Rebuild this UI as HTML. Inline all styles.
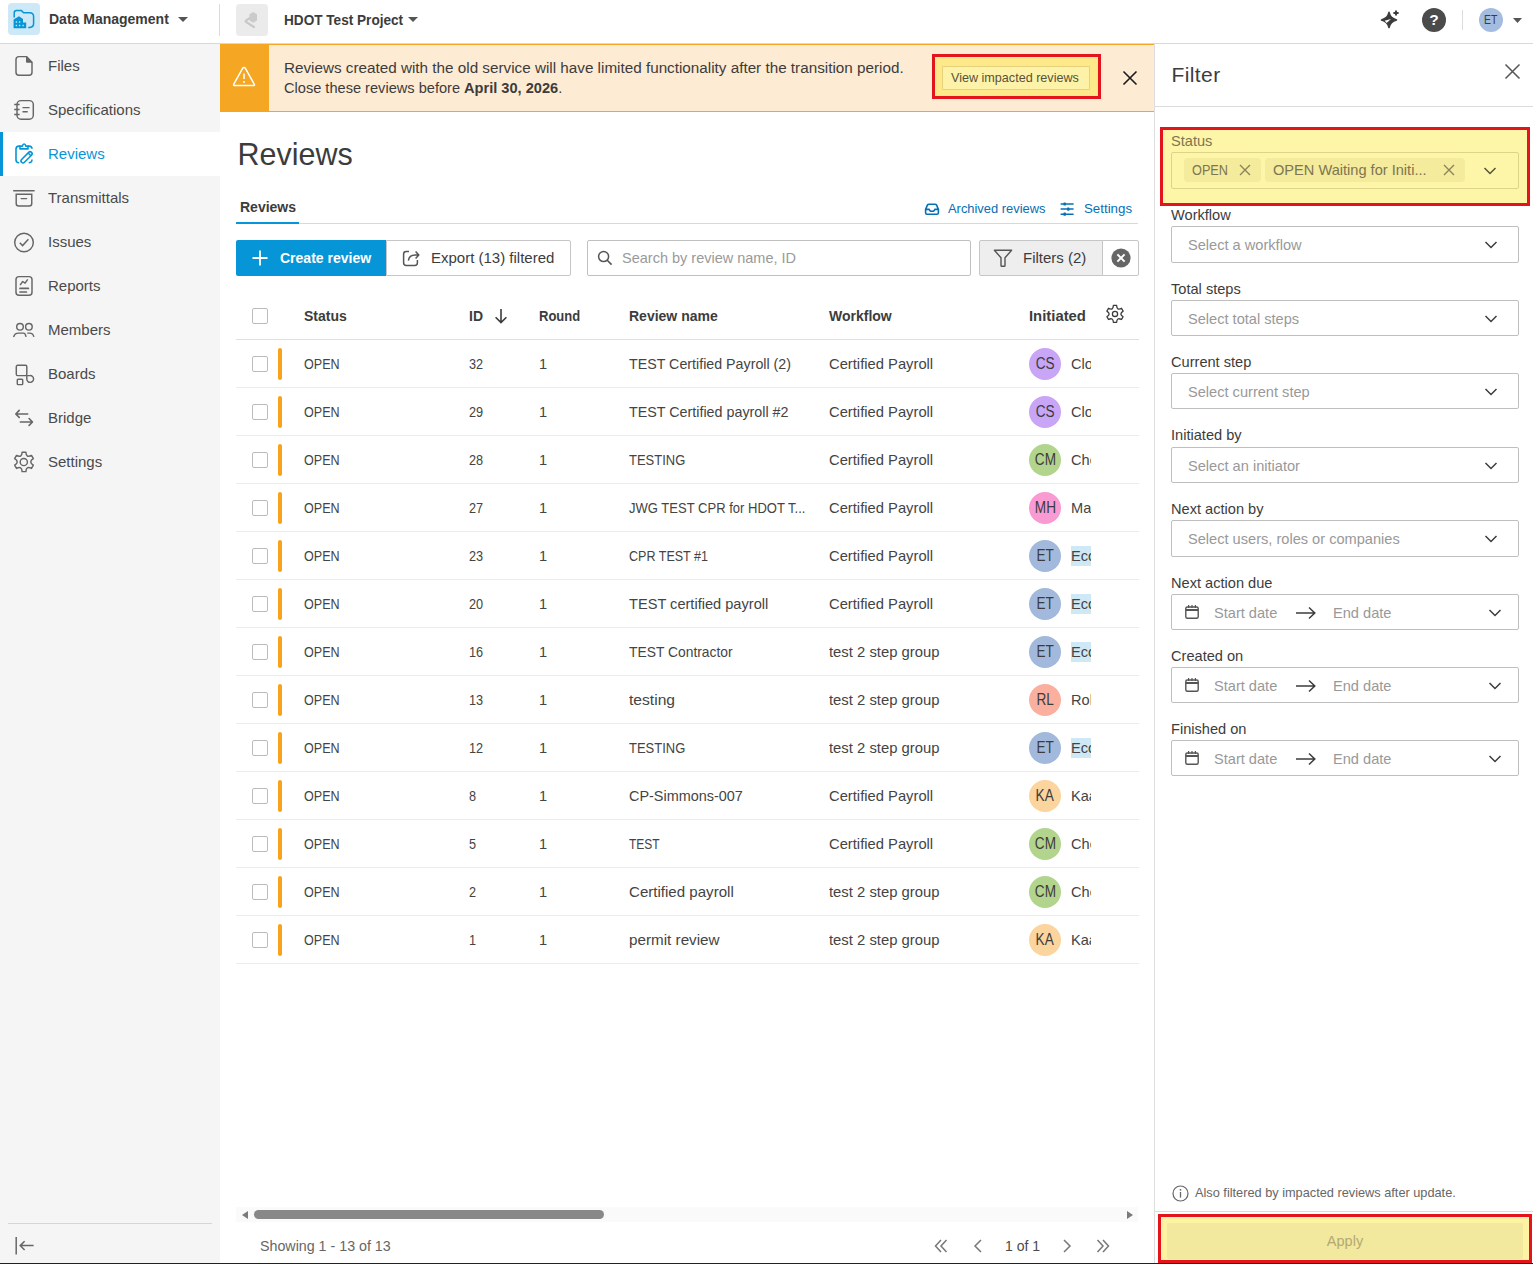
<!DOCTYPE html>
<html><head><meta charset="utf-8">
<style>
*{box-sizing:border-box;margin:0;padding:0}
html,body{width:1533px;height:1264px;overflow:hidden;background:#fff;font-family:"Liberation Sans",sans-serif;color:#3c3c3c}
.a{position:absolute;white-space:nowrap}
svg{position:absolute;display:block;overflow:visible}
.t15{font-size:15px;line-height:18px}
.t14{font-size:14px;line-height:18px}
.b{font-weight:bold}
.nav{position:absolute;left:0;width:220px;height:44px}
.nav .t{position:absolute;left:48px;top:13px;font-size:15px;line-height:18px;color:#4a4a4a}
.nav svg{left:12px;top:11px}
.nav.sel{background:#fff}
.nav.sel .t{color:#0696d7}
.nav.sel:before{content:"";position:absolute;left:0;top:0;width:3px;height:44px;background:#0696d7}
.row{position:absolute;left:236px;width:903px;height:48px;border-bottom:1px solid #ececec}
.row .c{position:absolute;top:15px;font-size:14.6px;line-height:18px;color:#444;white-space:nowrap}
.cb{position:absolute;left:16px;width:16px;height:16px;border:1px solid #bbbbbb;border-radius:2px;background:#fff}
.bar{position:absolute;left:42px;top:8px;width:4px;height:32px;border-radius:2px;background:#f7a21b}
.av{position:absolute;left:793px;top:8px;width:32px;height:32px;border-radius:16px;font-size:16px;line-height:32px;text-align:center;color:#3c3c3c}
.lab{position:absolute;left:1171px;font-size:14.6px;line-height:18px;color:#3c3c3c;white-space:nowrap}
.sel{}
.box{position:absolute;left:1171px;width:348px;height:36px;border:1px solid #bfbfbf;border-radius:2px;background:#fff}
.box .ph{position:absolute;left:16px;top:8.5px;font-size:14.6px;line-height:18px;color:#999;white-space:nowrap}
.chev{right:20px;top:12px}
</style></head><body>
<!-- HEADER -->
<div class="a" style="left:0;top:0;width:1533px;height:44px;background:#fff;border-bottom:1px solid #d9d9d9"></div>
<div class="a" style="left:8px;top:3px;width:32px;height:32px;border-radius:4px;background:#cde8f6"></div>
<svg style="left:8px;top:3px" width="32" height="32" viewBox="0 0 32 32">
 <path d="M6.2 14.5 V10 Q6.2 7.6 8.6 7.6 H13.4 L15.6 9.8 H21.6 Q25.6 9.8 25.6 13.8 V20.6 Q25.6 24.4 21.8 24.4 H20.2" fill="none" stroke="#0696d7" stroke-width="1.5"/>
 <path d="M5.6 25.2 V16.4 L11 13.2 L15 16 V19.6 H18.2 V25.2 Z" fill="#0696d7"/>
 <rect x="7.7" y="18.3" width="1.4" height="1.4" fill="#cde8f6"/><rect x="10.9" y="18.3" width="1.4" height="1.4" fill="#cde8f6"/>
 <rect x="7.7" y="21.8" width="1.4" height="1.4" fill="#cde8f6"/><rect x="10.9" y="21.8" width="1.4" height="1.4" fill="#cde8f6"/><rect x="14.4" y="21.8" width="1.4" height="1.4" fill="#cde8f6"/>
</svg>
<div class="a b" style="left:49px;top:10px;font-size:14px;line-height:18px;color:#3c3c3c">Data Management</div>
<svg style="left:178px;top:17px" width="10" height="5" viewBox="0 0 10 5"><path d="M0 0H10L5 5Z" fill="#555"/></svg>
<div class="a" style="left:219px;top:4px;width:1px;height:32px;background:#dcdcdc"></div>
<div class="a" style="left:236px;top:4px;width:32px;height:32px;border-radius:4px;background:#ebebeb"></div>
<svg style="left:236px;top:4px" width="32" height="32" viewBox="0 0 32 32"><path d="M17.2 8.1 L21 10.2 V16.6 L17.2 18.7 L13.4 16.6 V10.2 Z" fill="#cbcbcb"/><path d="M13.2 14.4 L10 16.6 Q9.3 17.2 10 17.8 L18 23" fill="none" stroke="#c8c8c8" stroke-width="2.2" stroke-linecap="round"/></svg>
<div class="a b" style="left:284px;top:10.5px;font-size:14.4px;line-height:18px;color:#3c3c3c;transform:scaleX(0.945);transform-origin:0 0">HDOT Test Project</div>
<svg style="left:408px;top:17px" width="10" height="5" viewBox="0 0 10 5"><path d="M0 0H10L5 5Z" fill="#555"/></svg>
<!-- right header icons -->
<svg style="left:1374px;top:4px" width="32" height="30" viewBox="0 0 32 30">
 <path d="M15 8.4 Q16.2 14.2 22.5 15.9 Q16.2 17.6 15 23.5 Q13.8 17.6 7.5 15.9 Q13.8 14.2 15 8.4 Z" fill="#3c3c3c" stroke="#3c3c3c" stroke-width="1.6" stroke-linejoin="round"/>
 <path d="M17 15.1 L10.6 16.7 Q11.6 17.6 12.6 19 Z" fill="#fff"/>
 <path d="M22 6.4 V11.6 M19.4 9 H24.6" stroke="#3c3c3c" stroke-width="1.9"/>
</svg>
<div class="a" style="left:1422px;top:8px;width:24px;height:24px;border-radius:12px;background:#4b4b4b;color:#fff;font-weight:bold;font-size:15.5px;line-height:24px;text-align:center">?</div>
<div class="a" style="left:1462px;top:10px;width:1px;height:20px;background:#dcdcdc"></div>
<div class="a" style="left:1479px;top:8px;width:24px;height:24px;border-radius:12px;background:#a3bce0;color:#3c3c3c;font-size:12px;line-height:24px;text-align:center"><span style="display:inline-block;transform:scaleX(0.87)">ET</span></div>
<svg style="left:1513px;top:18px" width="9" height="5" viewBox="0 0 9 5"><path d="M0 0H9L4.5 5Z" fill="#555"/></svg>

<!-- SIDEBAR -->
<div class="a" style="left:0;top:44px;width:220px;height:1220px;background:#f5f5f5"></div>

<div class="nav" style="top:44px"><svg width="24" height="24" viewBox="0 0 24 24"><path d="M7 1.6 H14.5 L20 7.2 V17.3 Q20 20.3 17 20.3 H7 Q4 20.3 4 17.3 V4.6 Q4 1.6 7 1.6Z" stroke="#666" stroke-width="1.45" fill="none" stroke-linejoin="round"/><path d="M14.5 1.6 V7.2 H20 Z" fill="#666" stroke="#666" stroke-width="1" stroke-linejoin="round"/></svg><div class="t">Files</div></div>
<div class="nav" style="top:88px"><svg width="24" height="24" viewBox="0 0 24 24"><rect x="5" y="1.6" width="16.3" height="18.6" rx="4" stroke="#666" stroke-width="1.45" fill="none"/><path d="M2.2 5.55 H7.6 M2.2 10.5 H7.6 M2.2 15.5 H7.6 M10.5 8.6 H17.6 M10.5 12.7 H15.7" stroke="#666" stroke-width="1.45" fill="none"/></svg><div class="t">Specifications</div></div>
<div class="nav sel" style="top:132px"><svg width="24" height="24" viewBox="0 0 24 24"><path d="M8 3.1 H7 Q4 3.1 4 6.1 V16.8 Q4 19.8 7 19.8 H7.2 M16 3.1 H17 Q20 3.1 20 5.8 M20 16.5 Q20 19.8 16.7 19.8" fill="none" stroke="#0696d7" stroke-width="1.6"/><path d="M8 5.9 V3.1 H10.4 Q10.8 1 12.1 1 Q13.4 1 13.8 3.1 H16 V5.9 Z" fill="none" stroke="#0696d7" stroke-width="1.6" stroke-linejoin="round"/><g transform="translate(14.55 14.35) rotate(-45)"><rect x="-7" y="-2" width="14" height="4" rx="2" fill="none" stroke="#0696d7" stroke-width="1.6"/><path d="M4.2 -2 V2" stroke="#0696d7" stroke-width="1.6"/></g></svg><div class="t">Reviews</div></div>
<div class="nav" style="top:176px"><svg width="24" height="24" viewBox="0 0 24 24"><path d="M1.7 3.8 H22.1" stroke="#666" stroke-width="1.45" fill="none" stroke-linecap="round"/><path d="M4.2 7.3 H19.75 V16.5 Q19.75 19 17.25 19 H6.7 Q4.2 19 4.2 16.5 Z" stroke="#666" stroke-width="1.45" fill="none"/><path d="M9.2 11.6 H14.6" stroke="#666" stroke-width="1.45" fill="none" stroke-linecap="round"/></svg><div class="t">Transmittals</div></div>
<div class="nav" style="top:220px"><svg width="24" height="24" viewBox="0 0 24 24"><circle cx="12" cy="11.5" r="9.3" stroke="#666" stroke-width="1.45" fill="none"/><path d="M7.8 11.8 L10.6 14.6 L16.4 8.2" stroke="#666" stroke-width="1.45" fill="none"/></svg><div class="t">Issues</div></div>
<div class="nav" style="top:264px"><svg width="24" height="24" viewBox="0 0 24 24"><rect x="4" y="1.6" width="16" height="18.7" rx="3" stroke="#666" stroke-width="1.45" fill="none"/><path d="M8.1 10.1 L10.7 6.5 L13.1 8.2 L15.7 4.4" stroke="#666" stroke-width="1.45" fill="none" stroke-linejoin="round"/><path d="M8 13.4 H16.4 M8 17 H14.4" fill="none" stroke="#666" stroke-width="1.7" stroke-linecap="round"/></svg><div class="t">Reports</div></div>
<div class="nav" style="top:308px"><svg width="24" height="24" viewBox="0 0 24 24"><circle cx="8" cy="7.8" r="3.3" stroke="#666" stroke-width="1.45" fill="none"/><circle cx="16.9" cy="7.8" r="3.3" stroke="#666" stroke-width="1.45" fill="none"/><path d="M1.6 18 Q2.6 14.1 6.5 14.1 H11.6 Q13.3 14.1 14.1 17.9 M15.2 14.1 H17.6 Q21 14.1 21.9 17.9" stroke="#666" stroke-width="1.45" fill="none"/></svg><div class="t">Members</div></div>
<div class="nav" style="top:352px"><svg width="24" height="24" viewBox="0 0 24 24"><rect x="4.3" y="2.3" width="10.5" height="10.3" rx="1.3" stroke="#666" stroke-width="1.45" fill="none"/><path d="M14.8 12.6 H18 A3.4 3.4 0 1 1 14.8 16 Z" stroke="#666" stroke-width="1.45" fill="none"/><rect x="5.3" y="16.3" width="5.4" height="5.3" rx="0.8" stroke="#666" stroke-width="1.45" fill="none"/></svg><div class="t">Boards</div></div>
<div class="nav" style="top:396px"><svg width="24" height="24" viewBox="0 0 24 24"><path d="M4.2 7 H15.7 M7.2 3.4 L3.8 7 L7.2 10.4 M8.35 15.05 H20 M17.1 11.5 L20.5 15.05 L17.1 18.4" fill="none" stroke="#666" stroke-width="1.6" stroke-linecap="round" stroke-linejoin="round"/></svg><div class="t">Bridge</div></div>
<div class="nav" style="top:440px"><svg width="24" height="24" viewBox="0 0 24 24"><path d="M10.11 1.18 L13.89 1.18 Q14.10 7.26 19.47 4.41 L21.36 7.68 Q16.20 10.90 21.36 14.12 L19.47 17.39 Q14.10 14.54 13.89 20.62 L10.11 20.62 Q9.90 14.54 4.53 17.39 L2.64 14.12 Q7.80 10.90 2.64 7.68 L4.53 4.41 Q9.90 7.26 10.11 1.18 Z" stroke="#666" stroke-width="1.45" fill="none" stroke-linejoin="round"/><circle cx="11.8" cy="11" r="3.6" stroke="#666" stroke-width="1.45" fill="none"/></svg><div class="t">Settings</div></div>
<div class="a" style="left:8px;top:1223px;width:204px;height:1px;background:#d6d6d6"></div>
<svg style="left:15px;top:1236px" width="20" height="20" viewBox="0 0 20 20"><path d="M1.2 1 V18.6 M5.2 9.6 H18.6 M9.6 5.2 L5.2 9.6 L9.6 14" fill="none" stroke="#666" stroke-width="1.5"/></svg>
<!-- BANNER -->
<div class="a" style="left:220px;top:44px;width:935px;height:68px;background:#fdebd3;border:1px solid #f5a623"></div>
<div class="a" style="left:220px;top:44px;width:49px;height:68px;background:#f5a623"></div>
<svg style="left:232px;top:65px" width="24" height="24" viewBox="0 0 24 24"><path d="M12 2.4 Q12.9 2.4 13.4 3.3 L22.2 19.2 Q22.9 20.6 21.3 20.6 H2.7 Q1.1 20.6 1.8 19.2 L10.6 3.3 Q11.1 2.4 12 2.4Z" fill="none" stroke="#fff" stroke-width="1.5" stroke-linejoin="round"/><path d="M12 8.4 V14" stroke="#fff" stroke-width="1.6"/><circle cx="12" cy="17" r="1" fill="#fff"/></svg>
<div class="a" style="left:284px;top:58px;font-size:15.25px;line-height:20px;color:#3c3c3c">Reviews created with the old service will have limited functionality after the transition period.</div>
<div class="a" style="left:284px;top:78px;font-size:14.6px;line-height:20px;color:#3c3c3c">Close these reviews before <b>April 30, 2026</b>.</div>
<div class="a" style="left:932px;top:54px;width:169px;height:45px;border:3px solid #e3141b;background:#fde98a"></div>
<div class="a" style="left:942px;top:66px;width:148px;height:24px;border:1px solid #e6d27d;background:#fdf2a8;border-radius:1px"></div>
<div class="a" style="left:951px;top:69px;font-size:12.6px;line-height:18px;color:#57533b">View impacted reviews</div>
<svg style="left:1122px;top:70px" width="16" height="16" viewBox="0 0 16 16"><path d="M1.5 1.5 L14.5 14.5 M14.5 1.5 L1.5 14.5" stroke="#1a1a1a" stroke-width="1.6"/></svg>

<!-- MAIN -->
<div class="a" style="left:237.5px;top:136px;font-size:30.5px;line-height:36px;color:#3c3c3c">Reviews</div>
<div class="a b" style="left:240px;top:198px;font-size:14px;line-height:18px;color:#3c3c3c">Reviews</div>
<div class="a" style="left:236px;top:223px;width:902px;height:1px;background:#d9d9d9"></div>
<div class="a" style="left:236px;top:222px;width:63px;height:2px;background:#0696d7"></div>
<svg style="left:923px;top:201px" width="18" height="18" viewBox="0 0 18 18"><path d="M2.6 8.4 L4.4 4.1 Q4.8 3.2 6 3.2 H12 Q13.2 3.2 13.6 4.1 L15.4 8.4 V11.8 Q15.4 13.2 14 13.2 H4 Q2.6 13.2 2.6 11.8 Z M2.6 8.4 H6.2 Q6.6 10.3 9 10.3 Q11.4 10.3 11.8 8.4 H15.4" fill="none" stroke="#0670b5" stroke-width="1.6" stroke-linejoin="round"/></svg>
<div class="a" style="left:948px;top:200px;font-size:12.9px;line-height:18px;color:#0670b5">Archived reviews</div>
<svg style="left:1059px;top:201px" width="18" height="18" viewBox="0 0 18 18"><path d="M1.6 3 H14.6 M1.6 8.1 H14.6 M1.6 13.2 H14.6" stroke="#0670b5" stroke-width="1.5"/><rect x="4.5" y="1.4" width="2.4" height="3.2" rx="0.6" fill="#0670b5"/><rect x="8.1" y="6.5" width="2.4" height="3.2" rx="0.6" fill="#0670b5"/><rect x="4.5" y="11.6" width="2.4" height="3.2" rx="0.6" fill="#0670b5"/></svg>
<div class="a" style="left:1084px;top:200px;font-size:13.3px;line-height:18px;color:#0670b5">Settings</div>

<div class="a" style="left:236px;top:240px;width:150px;height:36px;background:#0696d7;border-radius:2px 0 0 2px"></div>
<svg style="left:251px;top:249px" width="18" height="18" viewBox="0 0 18 18"><path d="M9 1.5 V16.5 M1.5 9 H16.5" stroke="#fff" stroke-width="1.8"/></svg>
<div class="a b" style="left:280px;top:249px;font-size:14px;line-height:18px;color:#fff">Create review</div>
<div class="a" style="left:386px;top:240px;width:185px;height:36px;border:1px solid #c6c6c6;border-radius:0 2px 2px 0;background:#fff"></div>
<svg style="left:401px;top:248px" width="20" height="20" viewBox="0 0 20 20"><path d="M8 3.6 H5.2 Q2.6 3.6 2.6 6.2 V14.8 Q2.6 17.4 5.2 17.4 H13.8 Q16.4 17.4 16.4 14.8 V12" fill="none" stroke="#555" stroke-width="1.5"/><path d="M7.4 12.6 Q8 7 14.4 7 H17.6 M14.6 3.6 L17.8 7 L14.6 10.4" fill="none" stroke="#555" stroke-width="1.5" stroke-linejoin="round"/></svg>
<div class="a" style="left:431px;top:249px;font-size:15px;line-height:18px;color:#3c3c3c">Export (13) filtered</div>
<div class="a" style="left:587px;top:240px;width:384px;height:36px;border:1px solid #c0c0c0;border-radius:2px;background:#fff"></div>
<svg style="left:596px;top:249px" width="18" height="18" viewBox="0 0 18 18"><circle cx="7.6" cy="7.6" r="5" fill="none" stroke="#555" stroke-width="1.5"/><path d="M11.2 11.2 L15.6 15.6" stroke="#555" stroke-width="1.6"/></svg>
<div class="a" style="left:622px;top:249px;font-size:14.5px;line-height:18px;color:#9a9a9a">Search by review name, ID</div>
<div class="a" style="left:979px;top:240px;width:124px;height:36px;border:1px solid #c6c6c6;border-radius:2px 0 0 2px;background:#eeeeee"></div>
<svg style="left:992px;top:248px" width="22" height="20" viewBox="0 0 22 20"><path d="M2.4 2.2 H19.6 L13 9.8 V17.4 Q13 18.2 12.2 18.2 H9.8 Q9 18.2 9 17.4 V9.8 Z" fill="none" stroke="#555" stroke-width="1.4" stroke-linejoin="round"/></svg>
<div class="a" style="left:1023px;top:249px;font-size:15px;line-height:18px;color:#3c3c3c">Filters (2)</div>
<div class="a" style="left:1102px;top:240px;width:37px;height:36px;border:1px solid #c6c6c6;border-radius:0 2px 2px 0;background:#fff"></div>
<svg style="left:1110px;top:247px" width="22" height="22" viewBox="0 0 22 22"><circle cx="11" cy="11" r="9.6" fill="#666"/><path d="M7.4 7.4 L14.6 14.6 M14.6 7.4 L7.4 14.6" stroke="#fff" stroke-width="2"/></svg>

<!-- TABLE HEADER -->
<div class="a" style="left:236px;top:292px;width:903px;height:48px;border-bottom:1px solid #e0e0e0"></div>
<div class="cb" style="left:252px;top:308px"></div>
<div class="a b" style="left:304px;top:307px;font-size:14px;line-height:18px">Status</div>
<div class="a b" style="left:469px;top:307px;font-size:14px;line-height:18px">ID</div>
<svg style="left:492px;top:307px" width="18" height="18" viewBox="0 0 18 18"><path d="M9 2 V15.6 M3.6 10.2 L9 15.6 L14.4 10.2" fill="none" stroke="#3c3c3c" stroke-width="1.6"/></svg>
<div class="a b" style="left:539px;top:307px;font-size:14px;line-height:18px;transform:scaleX(0.93);transform-origin:0 0">Round</div>
<div class="a b" style="left:629px;top:307px;font-size:14px;line-height:18px">Review name</div>
<div class="a b" style="left:829px;top:307px;font-size:14px;line-height:18px">Workflow</div>
<div class="a b" style="left:1029px;top:307px;font-size:14px;line-height:18px;transform:scaleX(1.06);transform-origin:0 0">Initiated</div>
<svg style="left:1105px;top:304px" width="20" height="20" viewBox="0 0 20 20"><path d="M8.36 1.46 L11.64 1.46 Q11.80 6.78 16.49 4.26 L18.13 7.10 Q13.60 9.90 18.13 12.70 L16.49 15.54 Q11.80 13.02 11.64 18.34 L8.36 18.34 Q8.20 13.02 3.51 15.54 L1.87 12.70 Q6.40 9.90 1.87 7.10 L3.51 4.26 Q8.20 6.78 8.36 1.46 Z" fill="none" stroke="#3c3c3c" stroke-width="1.3" stroke-linejoin="round"/><circle cx="10" cy="9.9" r="2.6" fill="none" stroke="#3c3c3c" stroke-width="1.3"/></svg>

<div class="row" style="top:340px"><div class="cb" style="top:16px"></div><div class="bar"></div><div class="c" style="left:68px;transform:scaleX(0.86);transform-origin:0 0">OPEN</div><div class="c" style="left:233px;transform:scaleX(0.87);transform-origin:0 0">32</div><div class="c" style="left:303px">1</div><div class="c" style="left:393px;transform:scaleX(0.976);transform-origin:0 0">TEST Certified Payroll (2)</div><div class="c" style="left:593px;transform:scaleX(1.011);transform-origin:0 0">Certified Payroll</div><div class="av" style="background:#c8a5f6"><span style="display:inline-block;transform:scaleX(0.85)">CS</span></div><div class="c" style="left:835px;width:20px;overflow:hidden">Clo</div></div>
<div class="row" style="top:388px"><div class="cb" style="top:16px"></div><div class="bar"></div><div class="c" style="left:68px;transform:scaleX(0.86);transform-origin:0 0">OPEN</div><div class="c" style="left:233px;transform:scaleX(0.87);transform-origin:0 0">29</div><div class="c" style="left:303px">1</div><div class="c" style="left:393px;transform:scaleX(0.98);transform-origin:0 0">TEST Certified payroll #2</div><div class="c" style="left:593px;transform:scaleX(1.011);transform-origin:0 0">Certified Payroll</div><div class="av" style="background:#c8a5f6"><span style="display:inline-block;transform:scaleX(0.85)">CS</span></div><div class="c" style="left:835px;width:20px;overflow:hidden">Clo</div></div>
<div class="row" style="top:436px"><div class="cb" style="top:16px"></div><div class="bar"></div><div class="c" style="left:68px;transform:scaleX(0.86);transform-origin:0 0">OPEN</div><div class="c" style="left:233px;transform:scaleX(0.87);transform-origin:0 0">28</div><div class="c" style="left:303px">1</div><div class="c" style="left:393px;transform:scaleX(0.889);transform-origin:0 0">TESTING</div><div class="c" style="left:593px;transform:scaleX(1.011);transform-origin:0 0">Certified Payroll</div><div class="av" style="background:#b3d48c"><span style="display:inline-block;transform:scaleX(0.85)">CM</span></div><div class="c" style="left:835px;width:20px;overflow:hidden">Cho</div></div>
<div class="row" style="top:484px"><div class="cb" style="top:16px"></div><div class="bar"></div><div class="c" style="left:68px;transform:scaleX(0.86);transform-origin:0 0">OPEN</div><div class="c" style="left:233px;transform:scaleX(0.87);transform-origin:0 0">27</div><div class="c" style="left:303px">1</div><div class="c" style="left:393px;transform:scaleX(0.893);transform-origin:0 0">JWG TEST CPR for HDOT T...</div><div class="c" style="left:593px;transform:scaleX(1.011);transform-origin:0 0">Certified Payroll</div><div class="av" style="background:#f99ad3"><span style="display:inline-block;transform:scaleX(0.85)">MH</span></div><div class="c" style="left:835px;width:20px;overflow:hidden">Ma</div></div>
<div class="row" style="top:532px"><div class="cb" style="top:16px"></div><div class="bar"></div><div class="c" style="left:68px;transform:scaleX(0.86);transform-origin:0 0">OPEN</div><div class="c" style="left:233px;transform:scaleX(0.87);transform-origin:0 0">23</div><div class="c" style="left:303px">1</div><div class="c" style="left:393px;transform:scaleX(0.859);transform-origin:0 0">CPR TEST #1</div><div class="c" style="left:593px;transform:scaleX(1.011);transform-origin:0 0">Certified Payroll</div><div class="av" style="background:#a3b9dc"><span style="display:inline-block;transform:scaleX(0.85)">ET</span></div><div class="a" style="left:835px;top:14px;width:20px;height:20px;background:#cfe8f6"></div><div class="c" style="left:835px;width:20px;overflow:hidden">Eco</div></div>
<div class="row" style="top:580px"><div class="cb" style="top:16px"></div><div class="bar"></div><div class="c" style="left:68px;transform:scaleX(0.86);transform-origin:0 0">OPEN</div><div class="c" style="left:233px;transform:scaleX(0.87);transform-origin:0 0">20</div><div class="c" style="left:303px">1</div><div class="c" style="left:393px;transform:scaleX(1.0);transform-origin:0 0">TEST certified payroll</div><div class="c" style="left:593px;transform:scaleX(1.011);transform-origin:0 0">Certified Payroll</div><div class="av" style="background:#a3b9dc"><span style="display:inline-block;transform:scaleX(0.85)">ET</span></div><div class="a" style="left:835px;top:14px;width:20px;height:20px;background:#cfe8f6"></div><div class="c" style="left:835px;width:20px;overflow:hidden">Eco</div></div>
<div class="row" style="top:628px"><div class="cb" style="top:16px"></div><div class="bar"></div><div class="c" style="left:68px;transform:scaleX(0.86);transform-origin:0 0">OPEN</div><div class="c" style="left:233px;transform:scaleX(0.87);transform-origin:0 0">16</div><div class="c" style="left:303px">1</div><div class="c" style="left:393px;transform:scaleX(0.949);transform-origin:0 0">TEST Contractor</div><div class="c" style="left:593px;transform:scaleX(1.016);transform-origin:0 0">test 2 step group</div><div class="av" style="background:#a3b9dc"><span style="display:inline-block;transform:scaleX(0.85)">ET</span></div><div class="a" style="left:835px;top:14px;width:20px;height:20px;background:#cfe8f6"></div><div class="c" style="left:835px;width:20px;overflow:hidden">Eco</div></div>
<div class="row" style="top:676px"><div class="cb" style="top:16px"></div><div class="bar"></div><div class="c" style="left:68px;transform:scaleX(0.86);transform-origin:0 0">OPEN</div><div class="c" style="left:233px;transform:scaleX(0.87);transform-origin:0 0">13</div><div class="c" style="left:303px">1</div><div class="c" style="left:393px;transform:scaleX(1.07);transform-origin:0 0">testing</div><div class="c" style="left:593px;transform:scaleX(1.016);transform-origin:0 0">test 2 step group</div><div class="av" style="background:#fbb09f"><span style="display:inline-block;transform:scaleX(0.85)">RL</span></div><div class="c" style="left:835px;width:20px;overflow:hidden">Rol</div></div>
<div class="row" style="top:724px"><div class="cb" style="top:16px"></div><div class="bar"></div><div class="c" style="left:68px;transform:scaleX(0.86);transform-origin:0 0">OPEN</div><div class="c" style="left:233px;transform:scaleX(0.87);transform-origin:0 0">12</div><div class="c" style="left:303px">1</div><div class="c" style="left:393px;transform:scaleX(0.889);transform-origin:0 0">TESTING</div><div class="c" style="left:593px;transform:scaleX(1.016);transform-origin:0 0">test 2 step group</div><div class="av" style="background:#a3b9dc"><span style="display:inline-block;transform:scaleX(0.85)">ET</span></div><div class="a" style="left:835px;top:14px;width:20px;height:20px;background:#cfe8f6"></div><div class="c" style="left:835px;width:20px;overflow:hidden">Eco</div></div>
<div class="row" style="top:772px"><div class="cb" style="top:16px"></div><div class="bar"></div><div class="c" style="left:68px;transform:scaleX(0.86);transform-origin:0 0">OPEN</div><div class="c" style="left:233px;transform:scaleX(0.87);transform-origin:0 0">8</div><div class="c" style="left:303px">1</div><div class="c" style="left:393px;transform:scaleX(0.989);transform-origin:0 0">CP-Simmons-007</div><div class="c" style="left:593px;transform:scaleX(1.011);transform-origin:0 0">Certified Payroll</div><div class="av" style="background:#fcd49d"><span style="display:inline-block;transform:scaleX(0.85)">KA</span></div><div class="c" style="left:835px;width:20px;overflow:hidden">Kaa</div></div>
<div class="row" style="top:820px"><div class="cb" style="top:16px"></div><div class="bar"></div><div class="c" style="left:68px;transform:scaleX(0.86);transform-origin:0 0">OPEN</div><div class="c" style="left:233px;transform:scaleX(0.87);transform-origin:0 0">5</div><div class="c" style="left:303px">1</div><div class="c" style="left:393px;transform:scaleX(0.823);transform-origin:0 0">TEST</div><div class="c" style="left:593px;transform:scaleX(1.011);transform-origin:0 0">Certified Payroll</div><div class="av" style="background:#b3d48c"><span style="display:inline-block;transform:scaleX(0.85)">CM</span></div><div class="c" style="left:835px;width:20px;overflow:hidden">Cho</div></div>
<div class="row" style="top:868px"><div class="cb" style="top:16px"></div><div class="bar"></div><div class="c" style="left:68px;transform:scaleX(0.86);transform-origin:0 0">OPEN</div><div class="c" style="left:233px;transform:scaleX(0.87);transform-origin:0 0">2</div><div class="c" style="left:303px">1</div><div class="c" style="left:393px;transform:scaleX(1.033);transform-origin:0 0">Certified payroll</div><div class="c" style="left:593px;transform:scaleX(1.016);transform-origin:0 0">test 2 step group</div><div class="av" style="background:#b3d48c"><span style="display:inline-block;transform:scaleX(0.85)">CM</span></div><div class="c" style="left:835px;width:20px;overflow:hidden">Cho</div></div>
<div class="row" style="top:916px"><div class="cb" style="top:16px"></div><div class="bar"></div><div class="c" style="left:68px;transform:scaleX(0.86);transform-origin:0 0">OPEN</div><div class="c" style="left:233px;transform:scaleX(0.87);transform-origin:0 0">1</div><div class="c" style="left:303px">1</div><div class="c" style="left:393px;transform:scaleX(1.044);transform-origin:0 0">permit review</div><div class="c" style="left:593px;transform:scaleX(1.016);transform-origin:0 0">test 2 step group</div><div class="av" style="background:#fcd49d"><span style="display:inline-block;transform:scaleX(0.85)">KA</span></div><div class="c" style="left:835px;width:20px;overflow:hidden">Kaa</div></div>

<!-- scrollbar + footer -->
<div class="a" style="left:236px;top:1207px;width:902px;height:15px;background:#fafafa"></div>
<svg style="left:240px;top:1210px" width="10" height="10" viewBox="0 0 10 10"><path d="M8 1 V9 L2 5Z" fill="#7a7a7a"/></svg>
<div class="a" style="left:254px;top:1210px;width:350px;height:9px;border-radius:5px;background:#888"></div>
<svg style="left:1125px;top:1210px" width="10" height="10" viewBox="0 0 10 10"><path d="M2 1 V9 L8 5Z" fill="#7a7a7a"/></svg>
<div class="a" style="left:260px;top:1237px;font-size:14.25px;line-height:18px;color:#666">Showing 1 - 13 of 13</div>
<svg style="left:932px;top:1237px" width="20" height="18" viewBox="0 0 20 18"><path d="M9 3 L3.5 9 L9 15 M14.5 3 L9 9 L14.5 15" fill="none" stroke="#777" stroke-width="1.5"/></svg>
<svg style="left:971px;top:1237px" width="14" height="18" viewBox="0 0 14 18"><path d="M10 3 L4 9 L10 15" fill="none" stroke="#777" stroke-width="1.5"/></svg>
<div class="a" style="left:1005px;top:1237px;font-size:14px;line-height:18px;color:#4a4a4a">1 of 1</div>
<svg style="left:1060px;top:1237px" width="14" height="18" viewBox="0 0 14 18"><path d="M4 3 L10 9 L4 15" fill="none" stroke="#777" stroke-width="1.5"/></svg>
<svg style="left:1093px;top:1237px" width="20" height="18" viewBox="0 0 20 18"><path d="M4.5 3 L10 9 L4.5 15 M10 3 L15.5 9 L10 15" fill="none" stroke="#777" stroke-width="1.5"/></svg>

<!-- PANEL -->
<div class="a" style="left:1154px;top:44px;width:1px;height:1220px;background:#dedede"></div>
<div class="a" style="left:1171.5px;top:62px;font-size:21px;line-height:26px;letter-spacing:0.4px;color:#3c3c3c">Filter</div>
<svg style="left:1504px;top:63px" width="17" height="17" viewBox="0 0 17 17"><path d="M1.5 1.5 L15.5 15.5 M15.5 1.5 L1.5 15.5" stroke="#555" stroke-width="1.5"/></svg>
<div class="a" style="left:1155px;top:106px;width:378px;height:1px;background:#dcdcdc"></div>

<div class="lab" style="top:206px">Workflow</div>
<div class="box" style="top:226px;height:37px"><div class="ph">Select a workflow</div><svg class="chev" width="14" height="10" viewBox="0 0 14 10" style="right:20px;top:13px"><path d="M1.5 2 L7 7.5 L12.5 2" fill="none" stroke="#3c3c3c" stroke-width="1.5"/></svg></div>
<div class="lab" style="top:280px">Total steps</div>
<div class="box" style="top:300px;height:36px"><div class="ph">Select total steps</div><svg class="chev" width="14" height="10" viewBox="0 0 14 10" style="right:20px;top:13px"><path d="M1.5 2 L7 7.5 L12.5 2" fill="none" stroke="#3c3c3c" stroke-width="1.5"/></svg></div>
<div class="lab" style="top:353px">Current step</div>
<div class="box" style="top:373px;height:36px"><div class="ph">Select current step</div><svg class="chev" width="14" height="10" viewBox="0 0 14 10" style="right:20px;top:13px"><path d="M1.5 2 L7 7.5 L12.5 2" fill="none" stroke="#3c3c3c" stroke-width="1.5"/></svg></div>
<div class="lab" style="top:426px">Initiated by</div>
<div class="box" style="top:447px;height:36px"><div class="ph">Select an initiator</div><svg class="chev" width="14" height="10" viewBox="0 0 14 10" style="right:20px;top:13px"><path d="M1.5 2 L7 7.5 L12.5 2" fill="none" stroke="#3c3c3c" stroke-width="1.5"/></svg></div>
<div class="lab" style="top:500px">Next action by</div>
<div class="box" style="top:520px;height:37px"><div class="ph">Select users, roles or companies</div><svg class="chev" width="14" height="10" viewBox="0 0 14 10" style="right:20px;top:13px"><path d="M1.5 2 L7 7.5 L12.5 2" fill="none" stroke="#3c3c3c" stroke-width="1.5"/></svg></div>
<div class="lab" style="top:574px">Next action due</div>
<div class="box" style="top:594px;height:36px"><svg width="16" height="16" viewBox="0 0 16 16" style="left:12px;top:9px"><rect x="1.8" y="3" width="12.4" height="11.2" rx="1.5" fill="none" stroke="#555" stroke-width="1.4"/><path d="M1.8 5 H14.2 V7 H1.8Z" fill="#555"/><path d="M4.6 1 V4 M8 1 V4 M11.4 1 V4" stroke="#555" stroke-width="1.2"/></svg><div class="ph" style="left:42px">Start date</div><svg width="22" height="14" viewBox="0 0 22 14" style="left:123px;top:11px"><path d="M1 7 H20 M14 1.5 L19.8 7 L14 12.5" fill="none" stroke="#3c3c3c" stroke-width="1.5"/></svg><div class="ph" style="left:161px">End date</div><svg class="chev" width="14" height="10" viewBox="0 0 14 10" style="right:16px;top:13px"><path d="M1.5 2 L7 7.5 L12.5 2" fill="none" stroke="#3c3c3c" stroke-width="1.5"/></svg></div>
<div class="lab" style="top:647px">Created on</div>
<div class="box" style="top:667px;height:36px"><svg width="16" height="16" viewBox="0 0 16 16" style="left:12px;top:9px"><rect x="1.8" y="3" width="12.4" height="11.2" rx="1.5" fill="none" stroke="#555" stroke-width="1.4"/><path d="M1.8 5 H14.2 V7 H1.8Z" fill="#555"/><path d="M4.6 1 V4 M8 1 V4 M11.4 1 V4" stroke="#555" stroke-width="1.2"/></svg><div class="ph" style="left:42px">Start date</div><svg width="22" height="14" viewBox="0 0 22 14" style="left:123px;top:11px"><path d="M1 7 H20 M14 1.5 L19.8 7 L14 12.5" fill="none" stroke="#3c3c3c" stroke-width="1.5"/></svg><div class="ph" style="left:161px">End date</div><svg class="chev" width="14" height="10" viewBox="0 0 14 10" style="right:16px;top:13px"><path d="M1.5 2 L7 7.5 L12.5 2" fill="none" stroke="#3c3c3c" stroke-width="1.5"/></svg></div>
<div class="lab" style="top:720px">Finished on</div>
<div class="box" style="top:740px;height:36px"><svg width="16" height="16" viewBox="0 0 16 16" style="left:12px;top:9px"><rect x="1.8" y="3" width="12.4" height="11.2" rx="1.5" fill="none" stroke="#555" stroke-width="1.4"/><path d="M1.8 5 H14.2 V7 H1.8Z" fill="#555"/><path d="M4.6 1 V4 M8 1 V4 M11.4 1 V4" stroke="#555" stroke-width="1.2"/></svg><div class="ph" style="left:42px">Start date</div><svg width="22" height="14" viewBox="0 0 22 14" style="left:123px;top:11px"><path d="M1 7 H20 M14 1.5 L19.8 7 L14 12.5" fill="none" stroke="#3c3c3c" stroke-width="1.5"/></svg><div class="ph" style="left:161px">End date</div><svg class="chev" width="14" height="10" viewBox="0 0 14 10" style="right:16px;top:13px"><path d="M1.5 2 L7 7.5 L12.5 2" fill="none" stroke="#3c3c3c" stroke-width="1.5"/></svg></div>

<div class="a" style="left:1160px;top:127px;width:370px;height:79px;border:3px solid #e3141b;background:#fdf5a8"></div>
<div class="lab" style="top:132px;color:#7d7650">Status</div>
<div class="a" style="left:1171px;top:152px;width:348px;height:37px;border:1px solid #ddd48a;border-radius:2px;background:#fdf5a8"></div>
<div class="a" style="left:1184px;top:158px;width:77px;height:24px;border-radius:4px;background:#f4eb9c"></div>
<div class="a" style="left:1192px;top:161px;font-size:14.6px;line-height:18px;color:#7d7650;transform:scaleX(0.87);transform-origin:0 0">OPEN</div>
<svg style="left:1239px;top:164px" width="12" height="12" viewBox="0 0 12 12"><path d="M1 1 L11 11 M11 1 L1 11" stroke="#8a845c" stroke-width="1.4"/></svg>
<div class="a" style="left:1265px;top:158px;width:200px;height:24px;border-radius:4px;background:#f4eb9c"></div>
<div class="a" style="left:1273px;top:161px;font-size:14.6px;line-height:18px;color:#7d7650">OPEN Waiting for Initi...</div>
<svg style="left:1443px;top:164px" width="12" height="12" viewBox="0 0 12 12"><path d="M1 1 L11 11 M11 1 L1 11" stroke="#8a845c" stroke-width="1.4"/></svg>
<svg style="left:1483px;top:166px" width="14" height="10" viewBox="0 0 14 10"><path d="M1.5 2 L7 7.5 L12.5 2" fill="none" stroke="#57533b" stroke-width="1.5"/></svg>

<svg style="left:1172px;top:1185px" width="17" height="17" viewBox="0 0 17 17"><circle cx="8.5" cy="8.5" r="7.5" fill="none" stroke="#666" stroke-width="1.2"/><path d="M8.5 7 V12.6" stroke="#666" stroke-width="1.3"/><circle cx="8.5" cy="4.8" r="0.9" fill="#666"/></svg>
<div class="a" style="left:1195px;top:1185px;font-size:12.75px;line-height:16px;color:#666">Also filtered by impacted reviews after update.</div>
<div class="a" style="left:1155px;top:1211px;width:378px;height:1px;background:#dcdcdc"></div>
<div class="a" style="left:1158px;top:1214px;width:374px;height:49px;border:3px solid #e3141b;background:#fdf3a3"></div>
<div class="a" style="left:1167px;top:1223px;width:356px;height:36px;background:#f2e89e;border-radius:2px"></div>
<div class="a" style="left:1167px;top:1232px;width:356px;text-align:center;font-size:14.5px;line-height:18px;color:#b2aa72">Apply</div>
<div class="a" style="left:0;top:1263px;width:1533px;height:1px;background:#222"></div>
</body></html>
